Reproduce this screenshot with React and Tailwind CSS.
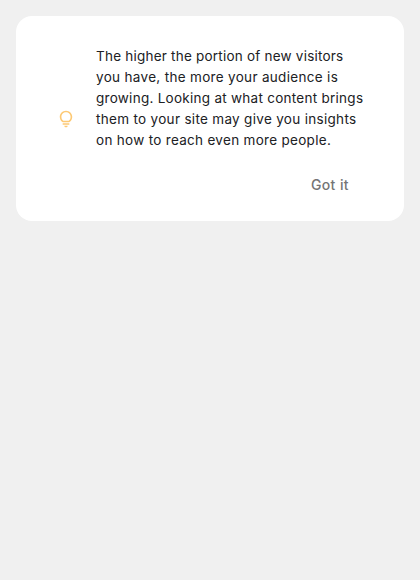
const lines = [
  { text: "The higher the portion of new visitors", style: "tracking-[0.22px]" },
  { text: "you have, the more your audience is", style: "tracking-[0.32px]" },
  { text: "growing. Looking at what content brings", style: "tracking-[0.27px]" },
  { text: "them to your site may give you insights", style: "tracking-[0.31px]" },
  { text: "on how to reach even more people.", style: "tracking-[0.3px]" },
];

export default function App() {
  return (
    <div className="min-h-screen bg-[#f0f0f0] p-4 font-['Inter',sans-serif]">
      <div className="flex h-[205px] flex-col rounded-[16px] bg-white pt-[30px]">
        <div className="flex items-center pl-10">
          <svg className="mt-10 h-5 w-5 shrink-0 fill-[#fdc974]" viewBox="0 0 24 24">
            <path d="M12 22c1.1 0 2-.9 2-2h-4c0 1.1.9 2 2 2zM8 17h8v2H8zM12 2C7.86 2 4.5 5.36 4.5 9.5c0 3.82 2.66 5.86 3.77 6.5h7.46c1.11-.64 3.77-2.68 3.77-6.5C19.5 5.36 16.14 2 12 2zm3.15 12h-6.3c-.9-.63-2.35-2.02-2.35-4.5C6.5 6.46 8.96 4 12 4s5.5 2.46 5.5 5.5c0 2.48-1.45 3.87-2.35 4.5z" />
          </svg>
          <p className="ml-5 text-[13.5px] leading-[21px] whitespace-nowrap text-[#202124]">
            {lines.map((line) => (
              <span key={line.text} className={"block " + line.style}>
                {line.text}
              </span>
            ))}
          </p>
        </div>
        <button className="mt-6 mr-[55px] self-end text-sm leading-5 font-medium tracking-[0.4px] text-[#757575]">
          Got it
        </button>
      </div>
    </div>
  );
}
